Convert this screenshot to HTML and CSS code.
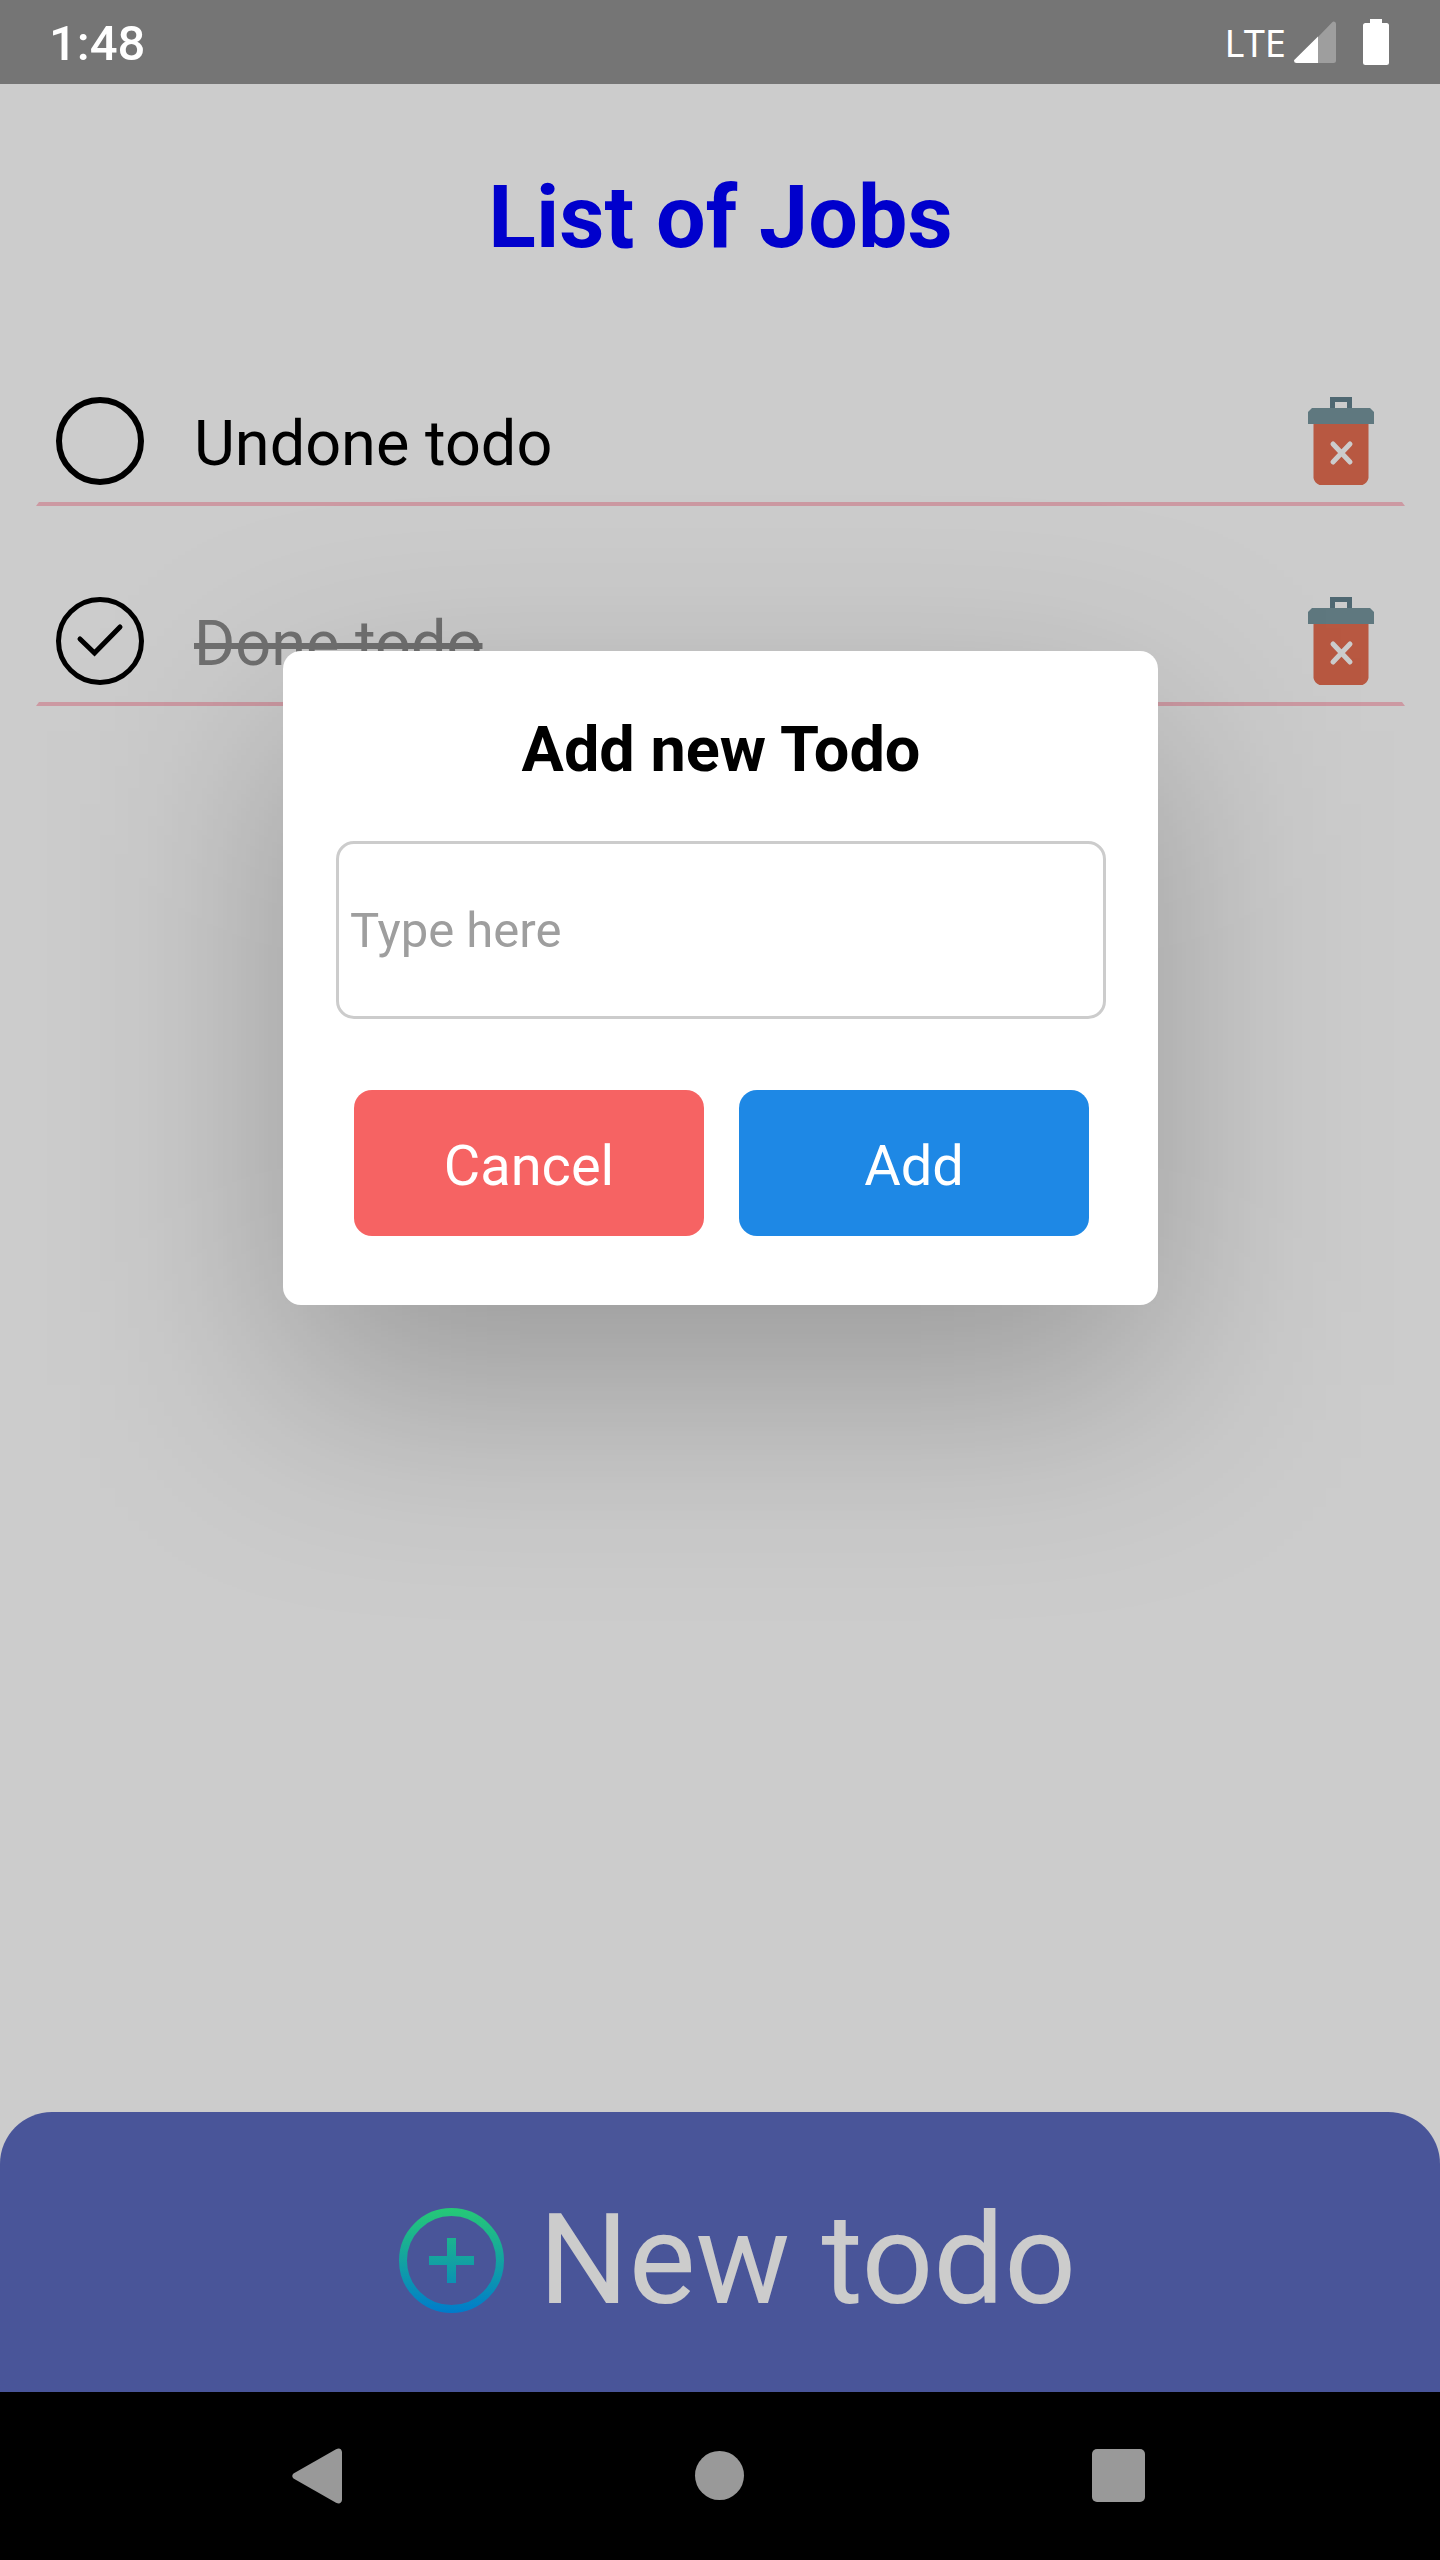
FILE: index.html
```html
<!DOCTYPE html>
<html lang="en">
<head>
<meta charset="utf-8">
<meta name="viewport" content="width=device-width, initial-scale=1">
<title>List of Jobs</title>
<link rel="stylesheet" href="styles.css">
</head>
<body>
<header class="status">
  <time class="clock">1:48</time>
  <div class="indicators">
    <span class="network">LTE</span>
    <svg class="signal" viewBox="0 0 42 42" aria-hidden="true">
      <path fill="#9e9e9e" d="M24 16 38 1.500q1.500-1.500 3-.500 1 .500 1 2V39.500q0 2.500-2.500 2.500H24z"/>
      <path fill="#fff" d="M24 15.500V42H2.500Q0 42 0 39.800 0 39 1 38.200z"/>
    </svg>
    <svg class="battery" viewBox="0 0 26 46" aria-hidden="true">
      <path fill="#fff" d="M7 0h12v4h4.500Q26 4 26 6.500v37q0 2.500-2.500 2.500h-21Q0 46 0 43.500v-37Q0 4 2.500 4H7z"/>
    </svg>
  </div>
</header>

<div class="app">
  <main class="content">
    <h1 class="heading">List of Jobs</h1>
    <ul class="jobs">
      <li class="job">
        <span class="tick">
          <input class="tick-box" type="checkbox" id="job-1">
          <svg class="tick-mark" viewBox="0 0 88 88" aria-hidden="true"><path d="M24 42 38.500 56 64 30"/></svg>
        </span>
        <label class="job-name" for="job-1">Undone todo</label>
        <button class="delete" type="button" aria-label="Delete Undone todo">
          <svg class="trash" viewBox="0 0 88 88" aria-hidden="true">
            <path fill="#63828f" d="M33 0h22v12H33zM38 5v6h12V5z" fill-rule="evenodd"/>
            <path fill="#e66e52" d="M16.500 27h55v54q-1 5-6 7h-43q-5-2-6-7z"/>
            <path fill="#77969f" d="M15 11h58l4 4v12H11V15z"/>
            <path stroke="#fff" stroke-width="5" stroke-linecap="round" d="M36 47 53 65M53 47 36 65"/>
          </svg>
        </button>
      </li>
      <li class="job">
        <span class="tick">
          <input class="tick-box" type="checkbox" id="job-2" checked>
          <svg class="tick-mark" viewBox="0 0 88 88" aria-hidden="true"><path d="M24 42 38.500 56 64 30"/></svg>
        </span>
        <label class="job-name" for="job-2">Done todo</label>
        <button class="delete" type="button" aria-label="Delete Done todo">
          <svg class="trash" viewBox="0 0 88 88" aria-hidden="true">
            <path fill="#63828f" d="M33 0h22v12H33zM38 5v6h12V5z" fill-rule="evenodd"/>
            <path fill="#e66e52" d="M16.500 27h55v54q-1 5-6 7h-43q-5-2-6-7z"/>
            <path fill="#77969f" d="M15 11h58l4 4v12H11V15z"/>
            <path stroke="#fff" stroke-width="5" stroke-linecap="round" d="M36 47 53 65M53 47 36 65"/>
          </svg>
        </button>
      </li>
    </ul>
  </main>

  <button class="new-todo" type="button">
    <svg class="plus" viewBox="0 0 105 105" aria-hidden="true">
      <defs>
        <linearGradient id="plus-fill" gradientUnits="userSpaceOnUse" x1="0" y1="0" x2="0" y2="105">
          <stop offset="0" stop-color="#30fc94"/>
          <stop offset="1" stop-color="#009bff"/>
        </linearGradient>
      </defs>
      <circle cx="52.500" cy="52.500" r="48.500" fill="none" stroke="url(#plus-fill)" stroke-width="8"/>
      <path fill="url(#plus-fill)" d="M48 30h9v18h18v9H57v18h-9V57H30v-9h18z"/>
    </svg>
    <span>New todo</span>
  </button>

  <div class="overlay">
    <form class="dialog" role="dialog" aria-labelledby="dialog-title">
      <h2 class="dialog-title" id="dialog-title">Add new Todo</h2>
      <input class="field" type="text" placeholder="Type here" aria-label="New todo">
      <div class="actions">
        <button class="action cancel" type="button">Cancel</button>
        <button class="action add" type="button">Add</button>
      </div>
    </form>
  </div>
</div>

<nav class="system-nav" aria-label="System">
  <button class="nav-key" type="button" aria-label="Back">
    <svg class="nav-icon" viewBox="0 0 56 56" aria-hidden="true"><path d="M1.500 25.500 44 1.200Q49 -1 50 4V52Q49 57 44 54.800L1.500 30.500Q-1 28 1.500 25.500z"/></svg>
  </button>
  <button class="nav-key" type="button" aria-label="Home">
    <svg class="nav-icon" viewBox="0 0 56 56" aria-hidden="true"><circle cx="27.500" cy="27.500" r="24.500"/></svg>
  </button>
  <button class="nav-key" type="button" aria-label="Recent apps">
    <svg class="nav-icon" viewBox="0 0 56 56" aria-hidden="true"><rect x="0" y="1" width="53" height="53" rx="5"/></svg>
  </button>
</nav>
</body>
</html>
```
FILE: styles.css
```css
* {
  box-sizing: border-box;
}

body {
  margin: 0;
  min-height: 100vh;
  display: flex;
  flex-direction: column;
  background: #fff;
  color: #000;
  font-family: Roboto, "Liberation Sans", sans-serif;
}

button {
  border: 0;
  padding: 0;
  background: none;
  color: inherit;
  font-family: inherit;
  cursor: pointer;
}

svg {
  display: block;
}

/* System status bar */
.status {
  height: 84px;
  padding: 0 51px 0 49px;
  display: flex;
  align-items: center;
  justify-content: space-between;
  background: #757575;
  color: #fff;
}

.clock {
  padding-top: 4px;
  font-size: 49px;
  font-weight: 500;
  line-height: 56px;
}

.indicators {
  display: flex;
  align-items: center;
}

.network {
  margin-right: 8px;
  font-family: "Noto Sans", sans-serif;
  font-size: 38px;
  font-weight: 400;
  line-height: 56px;
}

.signal {
  width: 42px;
  height: 42px;
  margin-right: 27px;
}

.battery {
  width: 26px;
  height: 46px;
}

/* Job list */
.app {
  position: relative;
  flex: 1;
  display: flex;
  flex-direction: column;
}

.content {
  flex: 1;
  padding: 81px 35px 81px 36px;
}

.heading {
  margin: 0 0 111px;
  font-size: 88px;
  font-weight: 700;
  line-height: 104px;
  text-align: center;
  color: #00f;
}

.jobs {
  margin: 0;
  padding: 0;
  display: flex;
  flex-direction: column;
  gap: 74px;
  list-style: none;
}

.job {
  padding: 17px;
  display: flex;
  align-items: center;
  border: 3px solid transparent;
  border-top: 0;
  border-bottom: 4px solid #ffc0cb;
}

.tick {
  margin-right: 50px;
  display: grid;
}

.tick-box,
.tick-mark {
  grid-area: 1 / 1;
  width: 88px;
  height: 88px;
}

.tick-box {
  appearance: none;
  margin: 0;
  border: 6px solid #000;
  border-radius: 50%;
}

.tick-box:checked {
  border-width: 5px;
}

.tick-mark {
  display: none;
  fill: none;
  stroke: #000;
  stroke-width: 5;
  stroke-linecap: round;
  pointer-events: none;
}

.tick-box:checked + .tick-mark {
  display: block;
}

.job-name {
  flex: 1;
  padding-top: 6px;
  font-size: 63px;
  line-height: 74px;
}

.tick:has(:checked) + .job-name {
  color: #8c8c8c;
  text-decoration: line-through;
}

.trash {
  width: 88px;
  height: 88px;
}

.new-todo {
  height: 280px;
  display: flex;
  align-items: center;
  justify-content: center;
  gap: 35px;
  padding: 16px 0 0 35px;
  border-radius: 52px 52px 0 0;
  background: #5c6bc0;
  color: #fff;
  font-size: 126px;
  line-height: 148px;
}

.plus {
  width: 105px;
  height: 105px;
}

/* Add dialog */
.overlay {
  position: absolute;
  z-index: 1;
  inset: 0;
  padding: 567px 36px 0 37px;
  display: flex;
  align-items: flex-start;
  justify-content: center;
  overflow: hidden;
  background: rgba(0, 0, 0, 0.2);
}

.dialog {
  position: relative;
  width: 100%;
  max-width: 875px;
  padding: 62px 52px 69px 53px;
  border-radius: 18px;
  background: #fff;
}

/* Soft shadow, cast downwards */
.dialog::before {
  content: "";
  position: absolute;
  z-index: -1;
  inset: 80px 0 -80px;
  background: rgba(0, 0, 0, 0.25);
  filter: blur(110px);
}

.dialog-title {
  margin: 0 0 54px;
  font-size: 63px;
  font-weight: 700;
  line-height: 74px;
  text-align: center;
}

.field {
  display: block;
  width: 100%;
  height: 178px;
  margin-bottom: 71px;
  padding: 0 11px;
  border: 3px solid #ccc;
  border-radius: 18px;
  background: #fff;
  font-family: inherit;
  font-size: 49px;
}

.field::placeholder {
  color: #9e9e9e;
  opacity: 1;
}

.actions {
  padding-left: 1px;
  display: flex;
  justify-content: center;
  gap: 35px;
}

.action {
  flex: 0 1 350px;
  height: 146px;
  padding-top: 6px;
  border-radius: 18px;
  color: #fff;
  font-size: 56px;
}

.cancel {
  background: #f66363;
}

.add {
  background: #1e88e5;
}

/* System navigation */
.system-nav {
  height: 168px;
  padding: 0 120px;
  display: grid;
  grid-template-columns: repeat(3, 1fr);
  background: #000;
}

.nav-key {
  display: flex;
  align-items: center;
  justify-content: center;
}

.nav-icon {
  width: 56px;
  height: 56px;
  fill: #999;
}
```
